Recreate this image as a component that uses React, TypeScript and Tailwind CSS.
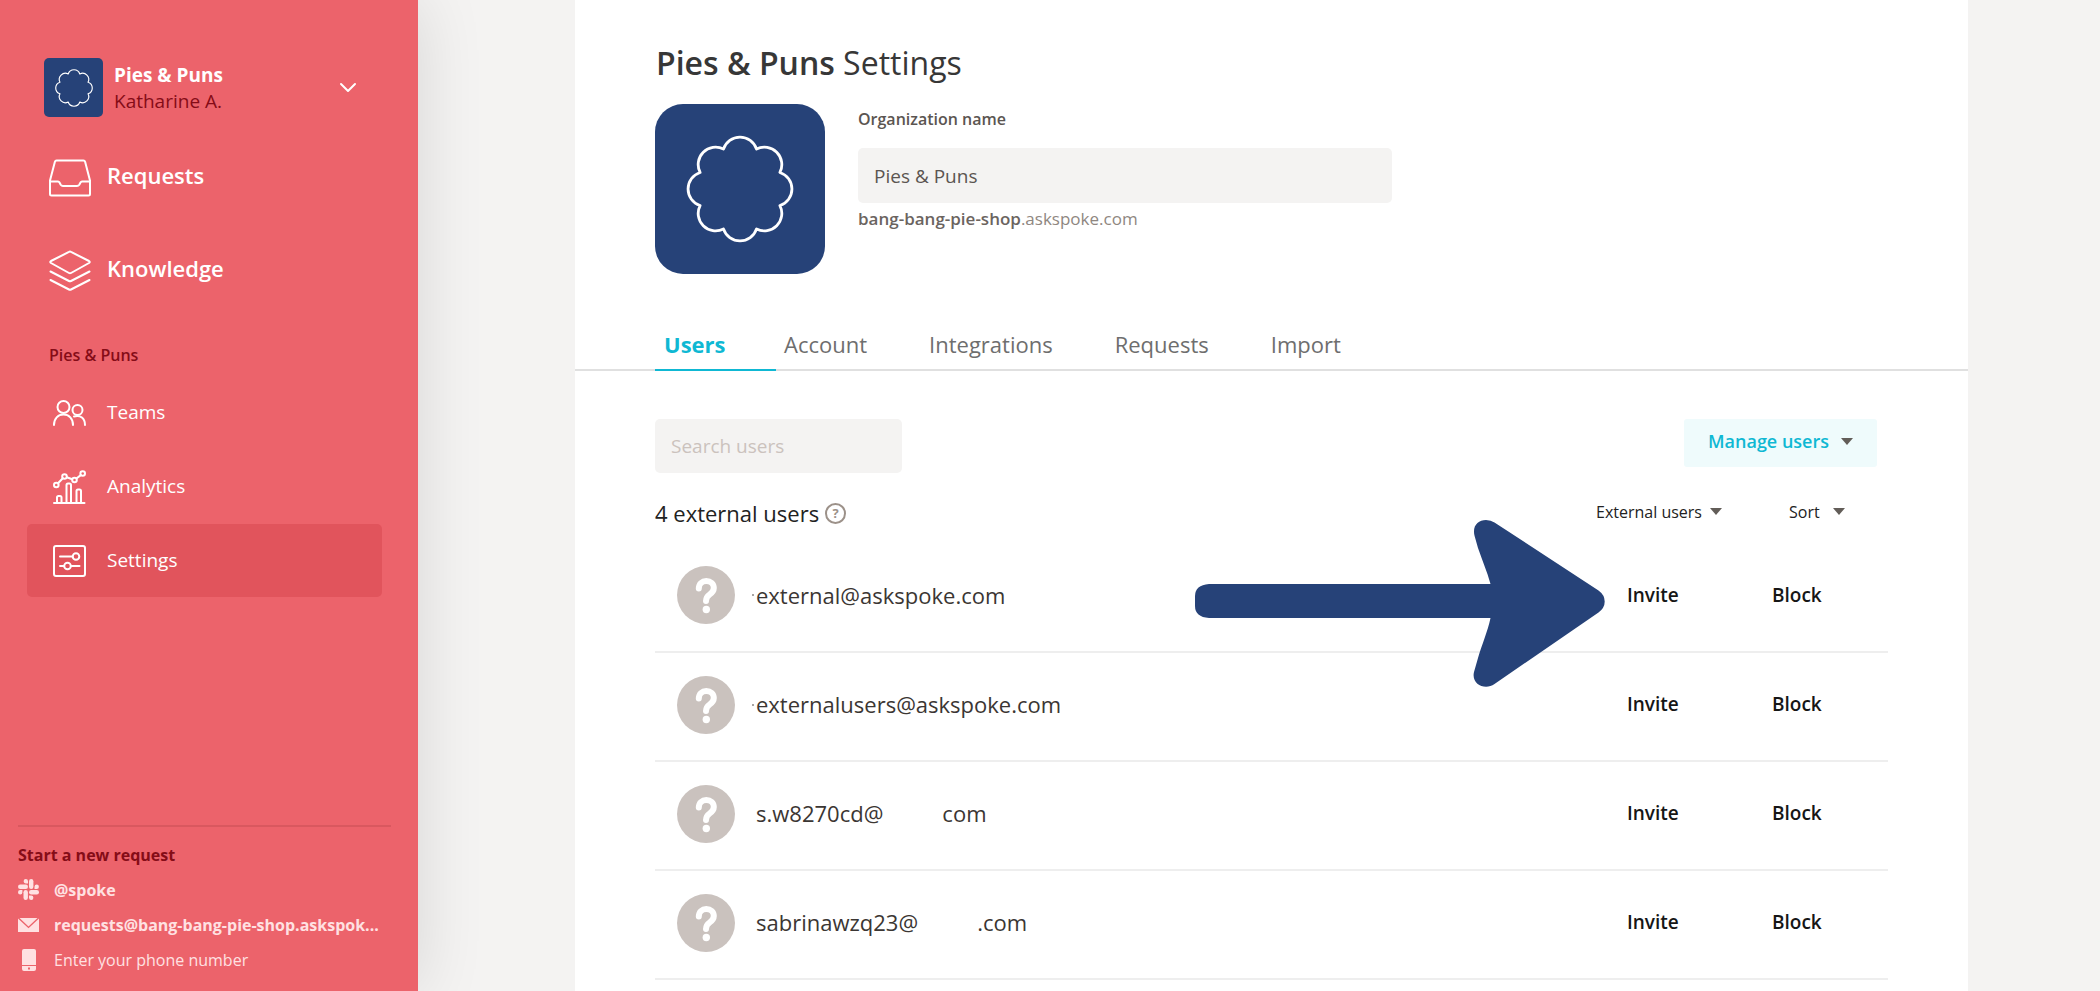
import type { ReactNode } from "react";

const PETALS = Array.from({ length: 8 }, (_, i) => {
  const point = (k: number) => {
    const angle = ((k * 45 - 112.5) * Math.PI) / 180;
    return `${(50 + 40 * Math.cos(angle)).toFixed(2)} ${(50 + 40 * Math.sin(angle)).toFixed(2)}`;
  };
  return `${i === 0 ? `M${point(0)}` : ""}A16.1 16.1 0 0 1 ${point(i + 1)}`;
}).join("");

function Flower({ className, stroke }: { className: string; stroke: number }) {
  return (
    <svg viewBox="0 0 100 100" className={className} fill="none" stroke="currentColor" strokeWidth={stroke} strokeLinejoin="round" aria-hidden="true">
      <path d={`${PETALS}Z`} />
    </svg>
  );
}

function Icon({ w, h, sw = 2, children }: { w: number; h: number; sw?: number; children: ReactNode }) {
  return (
    <svg width={w} height={h} viewBox={`0 0 ${w} ${h}`} fill="none" stroke="currentColor" strokeWidth={sw} strokeLinecap="round" strokeLinejoin="round" aria-hidden="true">
      {children}
    </svg>
  );
}

const InboxIcon = () => (
  <Icon w={42} h={38}>
    <path d="M7.5 1.5h27q1.200 0 1.600 1.200L41 21.500V35q0 1.500-1.500 1.500h-37Q1 36.500 1 35V21.500L5.900 2.700Q6.300 1.500 7.500 1.500Z" />
    <path d="M1 22.500h8q1 0 1.500 1l1.200 2.300q.8 1.200 2.300 1.200h14q1.500 0 2.300-1.200l1.200-2.300q.5-1 1.500-1h8" />
  </Icon>
);

const LayersIcon = () => (
  <Icon w={42} h={41}>
    <path d="M20 1.900q1-.6 2 0L40 11q1.500 1 0 2L22 23q-1 .6-2 0L2 13q-1.500-1 0-2Z" />
    <path d="M1.500 21.500 20 31q1 .5 2 0l18.500-9.500M1.500 30 20 39.500q1 .5 2 0L40.500 30" />
  </Icon>
);

const TeamsIcon = () => (
  <Icon w={33} h={26}>
    <circle cx="10.500" cy="7" r="6" />
    <circle cx="24.500" cy="10" r="5" />
    <path d="M1 25c0-6.500 4-10.500 9.500-10.500S20 18.500 20 25M21 16.500c6.500-2 11 2 11 8.500" />
  </Icon>
);

const AnalyticsIcon = () => (
  <Icon w={33} h={34}>
    <path d="M1 33h30.500M4 32.500v-5q0-1.500 1.500-1.500h1.500q1.500 0 1.500 1.500v5M13.500 32.500V15q0-1.500 1.500-1.500h1.500q1.500 0 1.500 1.500v17.500M23.500 32.500V21q0-1.500 1.500-1.500h1.500q1.500 0 1.500 1.500v11.500" />
    <circle cx="3.300" cy="15" r="2.300" />
    <circle cx="11.500" cy="6.500" r="2.300" />
    <circle cx="21.500" cy="10" r="2.300" />
    <circle cx="29.700" cy="3.500" r="2.300" />
    <path d="m5 13.200 4.800-5M13.800 7.200l5.400 2M23.400 8.500l4.400-3.400" />
  </Icon>
);

const SlidersIcon = () => (
  <Icon w={33} h={32}>
    <rect x="1" y="1" width="31" height="30" rx="2" />
    <path d="M7 11.500h12.500M7 21h4M18 21h8.500" />
    <circle cx="23" cy="11.500" r="3.300" />
    <circle cx="14.500" cy="21" r="3.300" />
  </Icon>
);

const SlackIcon = () => (
  <svg width="21" height="21" viewBox="0 0 21 21" fill="currentColor" aria-hidden="true">
    <rect x="11" y="0" width="4.400" height="10" rx="2.200" />
    <rect x="5.500" y="11" width="4.400" height="10" rx="2.200" />
    <rect x="0" y="5.500" width="10" height="4.400" rx="2.200" />
    <rect x="11" y="11" width="10" height="4.400" rx="2.200" />
    <path d="M10 4.400H7.700A2.200 2.200 0 1 1 10 2.200ZM16.500 9.900V7.700a2.200 2.200 0 1 1 2.200 2.200ZM11 16.500h2.200a2.200 2.200 0 1 1-2.200 2.200ZM4.400 11v2.200A2.200 2.200 0 1 1 2.200 11Z" />
  </svg>
);

const MailIcon = () => (
  <svg width="21" height="14" viewBox="0 0 21 14" fill="currentColor" aria-hidden="true">
    <path d="M1.500 0h18l-9 8.500ZM0 .5l10.500 9.800L21 .5V14H0Z" />
  </svg>
);

const PhoneIcon = () => (
  <svg width="14" height="22" viewBox="0 0 14 22" fill="currentColor" aria-hidden="true">
    <path d="M2 0h10q2 0 2 2v14H0V2q0-2 2-2Z" />
    <path fillRule="evenodd" d="M0 17h14v3q0 2-2 2H2q-2 0-2-2ZM6 18.500v2h2v-2Z" />
  </svg>
);

function Caret() {
  return (
    <svg width="12" height="7" viewBox="0 0 12 7" fill="#625d58" className="shrink-0" aria-hidden="true">
      <path d="M0 0h12L6 7Z" />
    </svg>
  );
}

const mainNav = [
  { label: "Requests", icon: <InboxIcon /> },
  { label: "Knowledge", icon: <LayersIcon /> },
];

const orgNav = [
  { label: "Teams", icon: <TeamsIcon />, active: false },
  { label: "Analytics", icon: <AnalyticsIcon />, active: false },
  { label: "Settings", icon: <SlidersIcon />, active: true },
];

const contacts = [
  { label: "@spoke", icon: <SlackIcon />, strong: true },
  { label: "requests@bang-bang-pie-shop.askspok...", icon: <MailIcon />, strong: true },
  { label: "Enter your phone number", icon: <PhoneIcon />, strong: false },
];

const tabs = ["Account", "Integrations", "Requests", "Import"];

const users = [
  { name: "external@askspoke.com", domain: "", mark: true },
  { name: "externalusers@askspoke.com", domain: "", mark: true },
  { name: "s.w8270cd@", domain: "com", mark: false },
  { name: "sabrinawzq23@", domain: ".com", mark: false },
];

function Sidebar() {
  return (
    <aside className="z-10 flex w-[418px] shrink-0 flex-col bg-[#ec636b] pt-[58px] text-white shadow-[0_0_64px_rgba(0,0,0,0.12)]">
      <button type="button" className="flex items-center pr-[61px] pl-[44px] text-left">
        <span className="flex size-[59px] items-center justify-center rounded-[5px] bg-[#264278]">
          <Flower className="size-[38px]" stroke={3} />
        </span>
        <span className="ml-[11px] flex flex-1 flex-col text-[19px] leading-[26px]">
          <span className="font-bold">Pies &amp; Puns</span>
          <span className="font-medium text-[#850c17]">Katharine A.</span>
        </span>
        <Icon w={18} h={11}>
          <path d="m2 2 7 7 7-7" />
        </Icon>
      </button>

      <nav aria-label="Main" className="mt-[14px] flex flex-col">
        {mainNav.map((item) => (
          <a key={item.label} href="#" className="flex h-[93px] items-center gap-[16px] pl-[49px] text-[22px] font-semibold">
            <span className="w-[42px]">{item.icon}</span>
            <span className="-mt-1">{item.label}</span>
          </a>
        ))}
      </nav>

      <h2 className="mt-[26px] pl-[49px] text-[16px] leading-[24px] font-semibold text-[#850c17]">Pies &amp; Puns</h2>
      <nav aria-label="Organization" className="mt-[9px] flex flex-col gap-px px-[27px]">
        {orgNav.map((item) => (
          <a
            key={item.label}
            href="#"
            aria-current={item.active ? "page" : undefined}
            className={`mr-[9px] flex h-[73px] items-center gap-[20px] rounded-[5px] pl-[26px] text-[19px] ${item.active ? "bg-[#e1545c]" : ""}`}
          >
            <span className="w-[34px]">{item.icon}</span>
            {item.label}
          </a>
        ))}
      </nav>

      <section className="mt-auto mr-[27px] ml-[18px] border-t-2 border-[#d9585f] pt-[16px] pb-[14px]">
        <h2 className="mb-[5px] text-[16px] leading-[24px] font-bold text-[#850c17]">Start a new request</h2>
        {contacts.map((c) => (
          <a key={c.label} href="#" className="flex h-[35px] items-center gap-[15px] text-[16px] whitespace-nowrap text-[#ffe1e2]">
            <span className="flex w-[21px] shrink-0 justify-center">{c.icon}</span>
            <span className={c.strong ? "font-bold" : ""}>{c.label}</span>
          </a>
        ))}
      </section>
    </aside>
  );
}

function Avatar() {
  return (
    <svg viewBox="0 0 58 58" className="size-[58px] shrink-0" aria-hidden="true">
      <circle cx="29" cy="29" r="29" fill="#cac2be" />
      <path d="M21.800 22.500c0-4.500 3.200-7.500 7.500-7.500s7.500 2.800 7.500 7c0 3.500-2 5-4.300 6.600-2.300 1.600-3.500 2.900-3.500 6.400" fill="none" stroke="#fff" strokeWidth="6" strokeLinecap="round" />
      <circle cx="29.300" cy="43.500" r="3.700" fill="#fff" />
    </svg>
  );
}

function UsersTable() {
  return (
    <div className="relative mt-[8px]">
      <table className="w-full table-fixed border-collapse" aria-label="External users">
        <colgroup>
          <col />
          <col className="w-[145px]" />
          <col className="w-[116px]" />
        </colgroup>
        <tbody>
          {users.map((u) => (
            <tr key={u.name} className="h-[109px] border-b-2 border-[#eeeeee]">
              <td className="p-0 pb-[4px] pl-[22px]">
                <div className="flex items-center">
                  <Avatar />
                  <span className="flex w-[21px] justify-end pr-[2px]">
                    {u.mark && <span className="size-[2px] rounded-full bg-[#8a8683]" />}
                  </span>
                  <span className="text-[22px] text-[#3b3633]">{u.name}</span>
                  {u.domain && <span className="ml-[59px] text-[22px] text-[#3b3633]">{u.domain}</span>}
                </div>
              </td>
              <td className="p-0 pb-[4px] text-[19px] font-semibold text-[#161616]">
                <button type="button">Invite</button>
              </td>
              <td className="p-0 pb-[4px] text-[19px] font-semibold text-[#161616]">
                <button type="button">Block</button>
              </td>
            </tr>
          ))}
        </tbody>
      </table>
      <svg width="410" height="168" viewBox="0 0 410 168" fill="#264278" className="pointer-events-none absolute -top-[23px] right-[283px]" aria-hidden="true">
        <path d="M14 64H295.500C292 51 287 40 283 28L279.600 16C277 6 283 0 291 0Q296 0 299.500 2.500L403.500 70.500Q409.700 75 409.700 81.500T403.500 92.500L299.500 164C290 171 276 164 279 152L283 138C287 124 292.500 112 295.500 98H14Q0 97 0 86V76Q0 65 14 64Z" />
      </svg>
    </div>
  );
}

export default function App() {
  return (
    <div className="flex min-h-screen bg-[#f4f3f2] font-['Open_Sans','Noto_Sans',sans-serif]">
      <Sidebar />
      <main className="ml-[157px] mr-[132px] flex-1 bg-white pt-[40px]">
        <header className="px-[80px]">
          <h1 className="pl-px text-[32px] leading-[46px] text-[#373737]">
            <span className="font-semibold">Pies &amp; Puns</span> Settings
          </h1>
          <div className="mt-[18px] flex gap-[33px]">
            <div className="flex size-[170px] items-center justify-center rounded-[28px] bg-[#264278] text-white">
              <Flower className="size-[108px]" stroke={2.6} />
            </div>
            <div className="flex w-[534px] flex-col">
              <label htmlFor="org-name" className="mt-[3px] text-[16px] leading-[24px] font-semibold text-[#5b5551]">
                Organization name
              </label>
              <input
                id="org-name"
                type="text"
                defaultValue="Pies & Puns"
                className="mt-[17px] h-[55px] rounded-[5px] bg-[#f4f3f2] px-[16px] text-[19px] text-[#5b5551] outline-none"
              />
              <p className="mt-[4px] text-[17px] leading-[24px] text-[#8f8781]">
                <span className="font-semibold text-[#6b645f]">bang-bang-pie-shop</span>.askspoke.com
              </p>
            </div>
          </div>
        </header>

        <div role="tablist" aria-label="Settings sections" className="mt-[45px] flex h-[52px] gap-[62px] border-b-2 border-[#e0e0e0] pl-[80px] text-[22px] text-[#6e6e6e]">
          <button type="button" role="tab" aria-selected="true" className="-mr-[54px] -mb-[2px] w-[121px] border-b-2 border-[#0fb8d3] pl-[9px] text-left font-bold text-[#0fb8d3]">
            Users
          </button>
          {tabs.map((t) => (
            <button key={t} type="button" role="tab" aria-selected="false">
              {t}
            </button>
          ))}
        </div>

        <section className="px-[80px] pt-[48px]">
          <div className="flex justify-between">
            <input
              type="search"
              aria-label="Search users"
              placeholder="Search users"
              className="h-[54px] w-[247px] rounded-[5px] bg-[#f4f3f2] px-[16px] text-[19px] text-[#5b5551] outline-none placeholder:text-[#cbc2bd]"
            />
            <button type="button" aria-haspopup="menu" className="mr-[11px] flex h-[48px] w-[193px] items-center justify-center gap-[12px] rounded-[3px] bg-[#effbfc] pb-[4px] text-[18px] font-semibold text-[#0fb8d3]">
              Manage users
              <Caret />
            </button>
          </div>

          <div className="mt-[18px] flex h-[44px] items-center">
            <h2 className="text-[22px] text-[#222222]">4 external users</h2>
            <button type="button" aria-label="About external users" className="ml-[6px] flex size-[21px] items-center justify-center rounded-full border-2 border-[#9c9189] text-[13px] leading-none font-bold text-[#9c9189]">
              ?
            </button>
            <label className="ml-auto flex items-center gap-[6px] pb-[3px]">
              <select aria-label="Filter users" className="w-[108px] appearance-none text-[16px] font-medium text-[#222222] outline-none">
                <option>External users</option>
              </select>
              <Caret />
            </label>
            <label className="mr-[43px] ml-[67px] flex items-center gap-[8px] pb-[3px]">
              <select aria-label="Sort users" className="w-[36px] appearance-none text-[16px] font-medium text-[#222222] outline-none">
                <option>Sort</option>
              </select>
              <Caret />
            </label>
          </div>

          <UsersTable />
        </section>
      </main>
    </div>
  );
}
